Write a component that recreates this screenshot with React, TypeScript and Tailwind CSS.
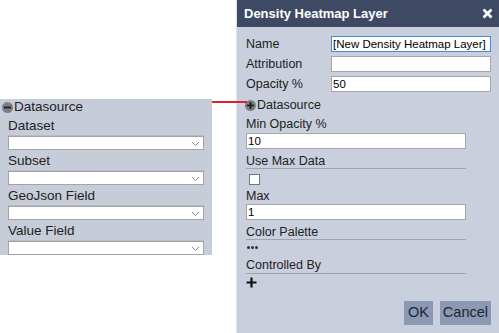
import React from "react";

const font = { fontFamily: '"Liberation Sans", Arial, sans-serif' };

const Chevron = () => (
  <svg width="9" height="6" viewBox="0 0 9 6" className="absolute right-[3px] top-[4px]">
    <path d="M1 1 L4.5 4.5 L8 1" fill="none" stroke="#8a8a8a" strokeWidth="1" />
  </svg>
);

const SelectField = ({ label }: { label: string }) => (
  <div className="flex flex-col">
    <div className="h-[21px] leading-[22px] text-[13.5px] text-[#222] border-b border-[#b8bcc6]">{label}</div>
    <div className="relative h-[14px] bg-white border border-[#a4a4a4]">
      <Chevron />
    </div>
  </div>
);

const CircleIcon = ({ plus }: { plus?: boolean }) => (
  <svg width="11" height="11" viewBox="0 0 11 11" className="shrink-0">
    <circle cx="5.5" cy="5.5" r="5.5" fill="#7b7f87" />
    <rect x="2" y="4.6" width="7" height="1.8" fill="#1e1e1e" />
    {plus && <rect x="4.6" y="2" width="1.8" height="7" fill="#1e1e1e" />}
  </svg>
);

const TextInput = ({ value, focus, className }: { value: string; focus?: boolean; className?: string }) => (
  <div
    className={`h-[16px] bg-white text-[11.5px] leading-[14px] text-black px-[1px] border whitespace-nowrap overflow-hidden ${
      focus ? "border-[#3b8fd8]" : "border-[#a6a6a6]"
    } ${className ?? ""}`}
  >
    {value}
  </div>
);

export default function App() {
  return (
    <div className="relative w-[499px] h-[333px] bg-white overflow-hidden" style={font}>
      {/* left datasource panel */}
      <div className="absolute left-0 top-[99px] w-[212px] h-[156px] bg-[#c7ccd9] px-[8px]">
        <div className="flex items-center gap-[1px] -ml-[6px] h-[16px] text-[13.5px] text-[#222]">
          <CircleIcon />
          <span>Datasource</span>
        </div>
        <div className="flex flex-col">
          <SelectField label="Dataset" />
          <SelectField label="Subset" />
          <SelectField label="GeoJson Field" />
          <SelectField label="Value Field" />
        </div>
      </div>

      {/* dialog */}
      <div className="absolute left-[236px] top-0 w-[263px] h-[333px] bg-[#c9cfdc] border-l border-[#dfe3ea]">
        <div className="h-[27px] bg-[#3e4a63] flex items-center justify-between pl-[7px] pr-[6px]">
          <span className="text-white font-bold text-[13px]">Density Heatmap Layer</span>
          <svg width="11" height="11" viewBox="0 0 11 11">
            <path d="M1.5 1.5 L9.5 9.5 M9.5 1.5 L1.5 9.5" stroke="white" strokeWidth="2.6" />
          </svg>
        </div>
        <div className="pl-[9px] pr-[8px] pt-[9px] text-[12.5px] text-[#222]">
          <div className="flex flex-col gap-[4px]">
            <div className="flex items-center h-[16px]">
              <span className="w-[85px]">Name</span>
              <TextInput value="[New Density Heatmap Layer]" focus className="w-[160px]" />
            </div>
            <div className="flex items-center h-[16px]">
              <span className="w-[85px]">Attribution</span>
              <TextInput value="" className="w-[160px]" />
            </div>
            <div className="flex items-center h-[16px]">
              <span className="w-[85px]">Opacity %</span>
              <TextInput value="50" className="w-[160px]" />
            </div>
          </div>

          <div className="flex items-center gap-[1px] h-[16px] mt-[5px] -ml-[1px]">
            <CircleIcon plus />
            <span>Datasource</span>
          </div>

          <div className="w-[220px] flex flex-col">
            <div className="h-[19px] leading-[20px] mt-[1px]">Min Opacity %</div>
            <TextInput value="10" className="h-[16px]" />

            <div className="h-[19px] leading-[22px] mt-[1px] border-b border-[#9ea4b0]">Use Max Data</div>
            <div className="h-[20px] flex items-center pl-[3px]">
              <div className="w-[11px] h-[11px] bg-white border border-[#777]" />
            </div>

            <div className="h-[15px] leading-[15px]">Max</div>
            <TextInput value="1" className="h-[16px]" />

            <div className="h-[20px] leading-[24px] border-b border-[#9ea4b0]">Color Palette</div>
            <div className="h-[14px] flex items-center gap-[1px] pl-[1px]">
              <span className="w-[3px] h-[3px] rounded-full bg-[#333]" />
              <span className="w-[3px] h-[3px] rounded-full bg-[#333]" />
              <span className="w-[3px] h-[3px] rounded-full bg-[#333]" />
            </div>

            <div className="h-[20px] leading-[22px] border-b border-[#9ea4b0]">Controlled By</div>
            <div className="h-[16px] flex items-center">
              <svg width="11" height="11" viewBox="0 0 11 11">
                <path d="M5.5 0.5 V10.5 M0.5 5.5 H10.5" stroke="#111" strokeWidth="2.2" />
              </svg>
            </div>
          </div>

          <div className="flex justify-end gap-[7px] mt-[11px]">
            <div className="h-[24px] px-[4px] bg-[#8c99b4] text-[14.5px] text-[#1e2530] flex items-center">OK</div>
            <div className="h-[24px] px-[3px] bg-[#8c99b4] text-[14.5px] text-[#1e2530] flex items-center">Cancel</div>
          </div>
        </div>
      </div>

      {/* connector, drawn over the dialog edge */}
      <div className="absolute left-[212px] top-[101px] w-[35px] h-[2px] bg-[#e0202a]" />
    </div>
  );
}
